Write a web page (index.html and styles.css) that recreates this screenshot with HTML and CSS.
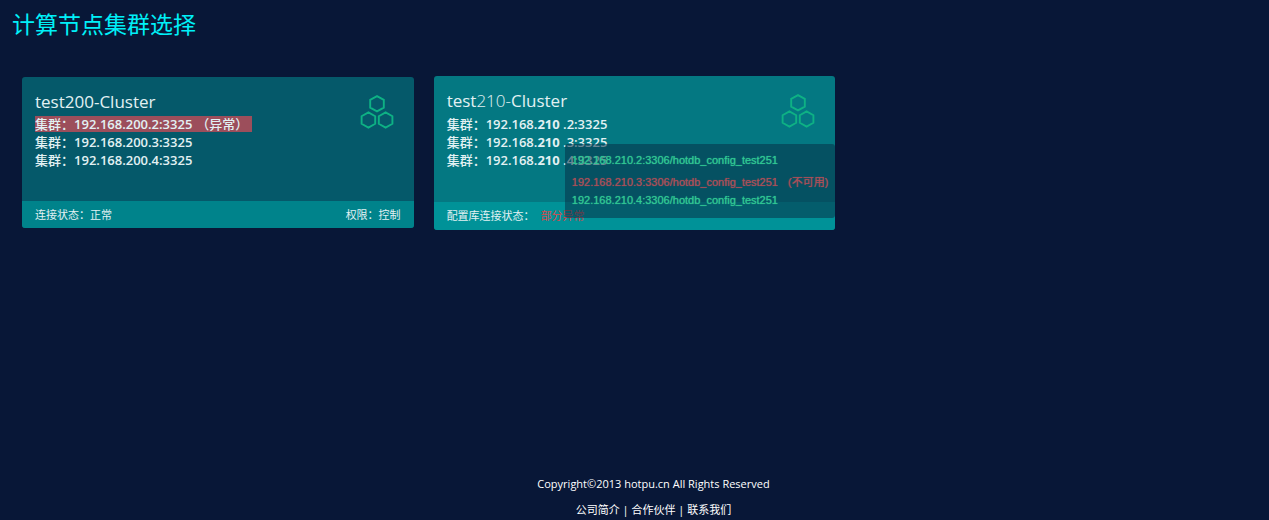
FILE: index.html
```
<!DOCTYPE html>
<html lang="zh-CN">
<head>
<meta charset="utf-8">
<meta name="viewport" content="width=device-width, initial-scale=1">
<title>计算节点集群选择</title>
<link rel="stylesheet" href="styles.css">
</head>
<body>
<svg class="sprite" aria-hidden="true">
  <symbol id="cluster" viewBox="0 0 34 34">
    <path d="M17 1.2 L23.8 4.9 V12.6 L17 16.4 L10.2 12.6 V4.9 Z M8.4 17.4 L15.2 21.2 V28.8 L8.4 32.6 L1.6 28.8 V21.2 Z M25.6 17.4 L32.4 21.2 V28.8 L25.6 32.6 L18.8 28.8 V21.2 Z" fill="none" stroke="currentColor" stroke-width="1.9"/>
  </symbol>
</svg>
<h1 class="page-title">计算节点集群选择</h1>
<main class="clusters">
  <article class="card">
    <div class="card-body">
      <h2 class="card-title">test200-Cluster</h2>
      <svg class="card-icon" aria-hidden="true"><use href="#cluster"/></svg>
      <ul class="nodes">
        <li class="node node-error"><span>集群：</span><span class="address">192.168.200.2:3325</span><span class="note">（异常）</span></li>
        <li class="node"><span>集群：</span><span class="address">192.168.200.3:3325</span></li>
        <li class="node"><span>集群：</span><span class="address">192.168.200.4:3325</span></li>
      </ul>
    </div>
    <div class="card-footer"><span>连接状态：正常</span><span>权限：控制</span></div>
  </article>
  <article class="card card-active">
    <div class="card-body">
      <h2 class="card-title">test<span class="light">210-</span>Cluster</h2>
      <svg class="card-icon" aria-hidden="true"><use href="#cluster"/></svg>
      <ul class="nodes">
        <li class="node"><span>集群：</span><span class="address">192.168.<b>210</b> .2:3325</span></li>
        <li class="node"><span>集群：</span><span class="address">192.168.<b>210</b> .3:3325</span></li>
        <li class="node"><span>集群：</span><span class="address">192.168.<b>210</b> .4:3325</span></li>
      </ul>
    </div>
    <div class="card-footer"><span>配置库连接状态：<span class="status-error">部分异常</span></span></div>
    <ul class="tooltip" role="tooltip">
      <li class="tip">192.168.210.2:3306/hotdb_config_test251</li>
      <li class="tip tip-error">192.168.210.3:3306/hotdb_config_test251<span>(不可用)</span></li>
      <li class="tip">192.168.210.4:3306/hotdb_config_test251</li>
    </ul>
  </article>
</main>
<footer class="page-footer">
  <p class="copyright">Copyright©2013 hotpu.cn All Rights Reserved</p>
  <nav class="links"><a href="#">公司简介</a> | <a href="#">合作伙伴</a> | <a href="#">联系我们</a></nav>
</footer>
</body>
</html>
```
FILE: styles.css
```
* { box-sizing: border-box; margin: 0; padding: 0; }
body {
  display: flex;
  flex-direction: column;
  min-height: 100vh;
  background: #081737;
  color: #e2f1f3;
  font-family: "Open Sans", "Noto Sans CJK SC", sans-serif;
  font-size: 11px;
  line-height: 18px;
}
ul { list-style: none; }
.sprite { position: absolute; width: 0; height: 0; }
.page-title {
  padding: 8px 12px;
  color: #00f0f8;
  font-size: 23px;
  font-weight: 400;
  line-height: 32px;
}
.clusters {
  display: grid;
  grid-template-columns: 39fr 40fr 40fr;
  align-items: start;
  gap: 20px;
  padding: 28px 12px 0 22px;
}
.card {
  position: relative;
  margin-top: 1px;
  border-radius: 3px;
  background: #05596a;
}
.card-body {
  display: grid;
  grid-template-columns: 1fr auto;
  min-height: 124px;
  padding: 12px 20px 0 13px;
  align-content: start;
}
.card-title {
  font-size: 17px;
  font-weight: 400;
  line-height: 26px;
}
.card-icon {
  grid-row: 1 / 3;
  grid-column: 2;
  width: 34px;
  height: 34px;
  margin-top: 6px;
  color: #0eb184;
}
.nodes {
  padding-top: 1px;
  font-size: 13px;
  font-weight: 500;
}
.node { width: fit-content; height: 18px; display: flex; }
.address { font-weight: 600; white-space: pre; }
.address b { font-weight: 700; }
.node-error {
  height: 16px;
  margin-bottom: 1px;
  padding-right: 4px;
  background: #9c4e5b;
  line-height: 16px;
}
.note { padding-left: 4px; }
.card-footer {
  display: flex;
  justify-content: space-between;
  padding: 5px 13px 4px;
  border-radius: 0 0 3px 3px;
  background: #00838b;
}
.card-active { margin-top: 0; background: #047882; }
.card-active .card-body { min-height: 126px; }
.card-active .card-footer { background: #009298; padding-bottom: 5px; }
.light { font-weight: 300; }
.status-error { padding-left: 6px; color: #d9484c; }
.tooltip {
  position: absolute;
  right: 0;
  bottom: 12px;
  padding: 7px 7px 9px;
  border-radius: 3px;
  background: rgba(8, 50, 72, 0.55);
  color: #30c793;
  font-family: "Liberation Sans", "Noto Sans CJK SC", sans-serif;
  text-shadow: 0 0 1px currentColor;
  white-space: nowrap;
}
.tip-error { display: flex; gap: 10px; margin-top: 4px; color: #a84f59; }
.page-footer {
  margin-top: auto;
  padding: 0 0 1px 38px;
  color: #fff;
  text-align: center;
}
.links { padding-top: 8px; }
.links a { color: inherit; text-decoration: none; }
```
